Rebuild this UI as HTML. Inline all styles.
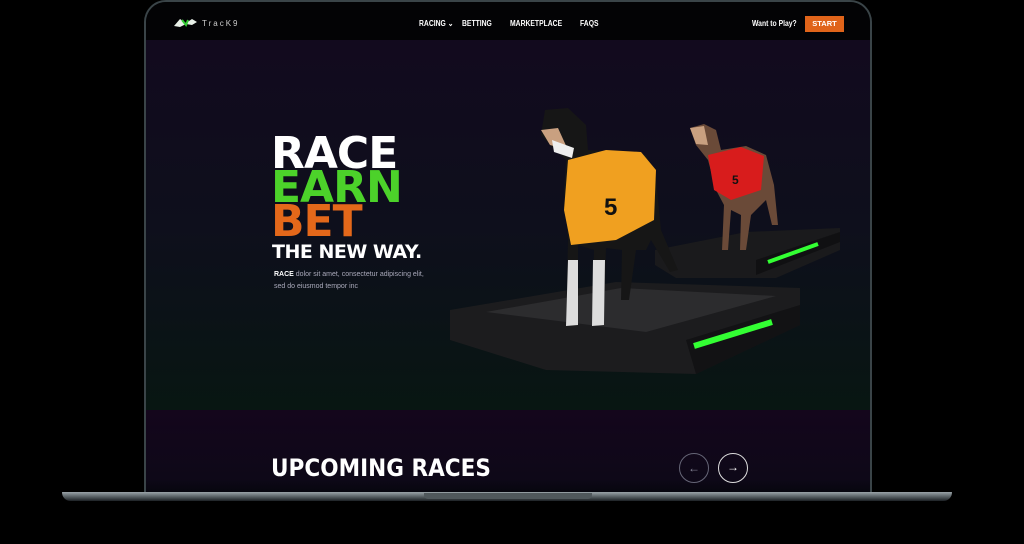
<!DOCTYPE html>
<html><head><style>
*{margin:0;padding:0;box-sizing:border-box}
body{width:1024px;height:544px;background:#000;position:relative;overflow:hidden;font-family:"Liberation Sans",sans-serif}
.scr{position:absolute;left:144px;top:0;width:728px;height:494px;border-radius:22px 22px 0 0;border:2px solid #3a4448;border-bottom:none;background:#000;overflow:hidden}
.nav{position:absolute;left:0;top:0;width:100%;height:38px;background:#030305}
.hero{position:absolute;left:0;top:38px;width:100%;height:370px;background:linear-gradient(180deg,#120a1e 0%,#0e0f1c 50%,#081612 100%)}
.low{position:absolute;left:0;top:408px;width:100%;height:86px;background:linear-gradient(180deg,#14061c,#0e0818 80%,#05060c)}
.nl{position:absolute;top:17px;color:#fff;font-size:8px;font-weight:bold;transform:scaleX(.85);transform-origin:left}
.big{position:absolute;left:125px;font-weight:900;font-size:44px;line-height:34px;letter-spacing:-1px;font-family:"DejaVu Sans",sans-serif}
.base{position:absolute;left:62px;top:492px;width:890px;height:9px;border-radius:2px 2px 40px 40px;background:linear-gradient(180deg,#9aa3a8,#5a6266 50%,#1c2024)}
</style></head><body>
<div class="scr">
 <div class="nav">
  <svg style="position:absolute;left:26px;top:14px" width="26" height="12"><path d="M2 10 L8 3 L14 7 L20 3 L25 6 L20 9 L14 8 L8 11Z" fill="#e8f0e8"/><path d="M10 4 L14 9 L16 4" stroke="#3c3" stroke-width="2" fill="none"/></svg>
  <div style="position:absolute;left:56px;top:17px;color:#ccc;font-size:8px;letter-spacing:2px">TracK9</div>
  <div class="nl" style="left:273px">RACING ⌄</div>
  <div class="nl" style="left:316px">BETTING</div>
  <div class="nl" style="left:364px">MARKETPLACE</div>
  <div class="nl" style="left:434px">FAQS</div>
  <div class="nl" style="left:606px;font-size:8px">Want to Play?</div>
  <div style="position:absolute;left:659px;top:14px;width:39px;height:16px;background:#e0641a;color:#fff;font-size:7.5px;font-weight:bold;text-align:center;line-height:16px">START</div>
 </div>
 <div class="hero">
  <div class="big" style="top:97px;color:#fff">RACE</div>
  <div class="big" style="top:131px;color:#4cd22a">EARN</div>
  <div class="big" style="top:165px;color:#e4681a">BET</div>
  <div style="position:absolute;left:126px;top:201px;color:#fff;font-size:19px;font-weight:bold;font-family:'DejaVu Sans',sans-serif;letter-spacing:-0.5px">THE NEW WAY.</div>
  <div style="position:absolute;left:128px;top:229px;color:#aab;font-size:7px;line-height:12px;width:150px"><b style="color:#fff">RACE</b> dolor sit amet, consectetur adipiscing elit, sed do eiusmod tempor inc</div>
  <svg style="position:absolute;left:300px;top:60px" width="420" height="310">
   <polygon points="209,150 300,132 394,128 394,150 330,178 230,178 209,165" fill="#1a1a1c"/>
   <polygon points="310,160 394,132 394,142 310,175" fill="#101012"/>
   <line x1="322" y1="162" x2="372" y2="144" stroke="#3f3" stroke-width="4"/>
   <path d="M244 28 L258 24 L270 30 L275 50 L300 46 L320 55 L328 85 L332 125 L326 125 L320 100 L310 110 L305 115 L300 150 L294 150 L295 115 L285 110 L282 150 L276 150 L278 105 L270 90 L262 60 L250 45 Z" fill="#6a4a38"/>
   <path d="M244 28 L258 26 L262 45 L250 44Z" fill="#c9a080"/>
   <path d="M262 55 L295 47 L318 56 L315 90 L285 100 L268 90 Z" fill="#d81c1c"/>
   <text x="286" y="84" font-size="12" font-weight="bold" fill="#111">5</text>
   <polygon points="4,210 170,182 354,188 354,225 250,274 100,270 4,240" fill="#1c1c1e"/>
   <polygon points="40,212 175,188 330,196 200,232" fill="#2c2c2e"/>
   <polygon points="240,240 354,205 354,225 250,274" fill="#121214"/>
   <line x1="248" y1="246" x2="326" y2="222" stroke="#3f3" stroke-width="6"/>
   <path d="M99 10 L122 8 L140 25 L142 50 L170 52 L200 55 L210 80 L215 130 L232 170 L224 172 L205 140 L200 150 L190 150 L183 200 L175 200 L176 150 L160 148 L158 225 L146 226 L148 150 L132 145 L132 225 L120 226 L122 140 L118 90 L120 60 L104 45 L95 35 Z" fill="#161616"/>
   <path d="M122 160 L132 160 L132 225 L120 226Z M147 160 L159 160 L158 225 L146 226Z" fill="#ddd"/>
   <path d="M95 30 L112 28 L122 50 L104 45 Z" fill="#c9a080"/>
   <path d="M106 40 L128 48 L126 58 L108 52Z" fill="#eee"/>
   <path d="M122 60 L160 50 L195 52 L210 70 L208 120 L170 140 L125 145 L118 110 Z" fill="#f0a020"/>
   <text x="158" y="115" font-size="24" font-weight="bold" fill="#111">5</text>
  </svg>
 </div>
 <div class="low">
  <div style="position:absolute;left:125px;top:44px;color:#fff;font-size:24px;font-weight:900;font-family:'DejaVu Sans',sans-serif;transform:scaleX(.9);transform-origin:left">UPCOMING RACES</div>
  <div style="position:absolute;left:533px;top:43px;width:30px;height:30px;border:1px solid #667;border-radius:50%;color:#889;text-align:center;line-height:28px;font-size:12px">←</div>
  <div style="position:absolute;left:572px;top:43px;width:30px;height:30px;border:1.5px solid #ddd;border-radius:50%;color:#fff;text-align:center;line-height:27px;font-size:12px">→</div>
 </div>
</div>
<div class="base"></div>
<div style="position:absolute;left:424px;top:493px;width:168px;height:6px;background:#50585c;border-radius:0 0 4px 4px"></div>
</body></html>
